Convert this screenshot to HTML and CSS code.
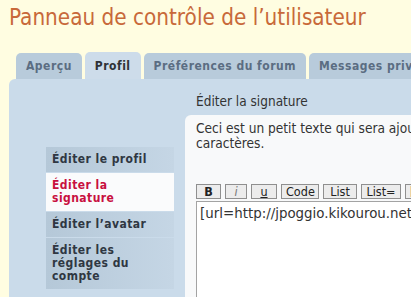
FILE: index.html
```html
<!DOCTYPE html>
<html lang="fr">
<head>
  <meta charset="UTF-8" />
  <title>Panneau de contrôle de l’utilisateur</title>
  <link rel="stylesheet" href="styles.css">
</head>
<body>
  <div class="page">
    <h1>Panneau de contrôle de l’utilisateur</h1>

    <ul class="tabs">
      <li><a href="#">Aperçu</a></li>
      <li class="active"><a href="#">Profil</a></li>
      <li><a href="#">Préférences du forum</a></li>
      <li><a href="#">Messages privés</a></li>
      <li><a href="#">Groupes d’utilisateurs</a></li>
    </ul>

    <div class="panel">
      <div class="side">
        <ul class="menu">
          <li><a href="#">Éditer le profil</a></li>
          <li class="active"><a href="#">Éditer la signature</a></li>
          <li><a href="#">Éditer l’avatar</a></li>
          <li><a href="#">Éditer les réglages du compte</a></li>
        </ul>
      </div>

      <div class="main">
        <h3>Éditer la signature</h3>
        <div class="box">
          <p>Ceci est un petit texte qui sera ajouté à la fin de chacun de vos messages. Il est limité à 255<br>caractères.</p>

          <div class="buttons">
            <button class="b">B</button>
            <button class="i">i</button>
            <button class="u">u</button>
            <button class="code">Code</button>
            <button class="list">List</button>
            <button class="list-eq">List=</button>
            <button>[*]</button>
            <button>Img</button>
            <button>URL</button>
          </div>

          <textarea rows="8">[url=http://jpoggio.kikourou.net]Mon blog[/url]</textarea>
        </div>
      </div>
    </div>
  </div>
</body>
</html>
```

FILE: styles.css
```css
html, body {
  overflow: hidden;
}
body {
  margin: 0;
  background: #fffde1;
  font-family: 'DejaVu Sans Condensed', 'DejaVu Sans', sans-serif;
  color: #333;
}
.page {
  width: 900px;
  padding-left: 9px;
}
h1 {
  margin: 0;
  padding-top: 4px;
  font-size: 22.3px;
  font-weight: normal;
  color: #c8693a;
  line-height: 26px;
}
.tabs {
  list-style: none;
  margin: 22px 0 0;
  padding-left: 7px;
  display: flex;
  align-items: flex-end;
  gap: 3px;
  white-space: nowrap;
}
.tabs li {
  background: #b8cbdb;
  border-radius: 5px 5px 0 0;
  height: 26px;
}
.tabs li.active {
  background: #cddcea;
  height: 27px;
}
.tabs a {
  display: block;
  padding: 0 10px;
  line-height: 26px;
  font-size: 12px;
  font-weight: bold;
  letter-spacing: 0.5px;
  color: #5b6d82;
  text-decoration: none;
}
.tabs li.active a {
  color: #2f3236;
  line-height: 28px;
}
.panel {
  background: #cadbea;
  border-radius: 6px 0 0 0;
  display: flex;
  min-height: 240px;
}
.side {
  width: 176px;
  padding: 68px 11px 0 37px;
  box-sizing: border-box;
}
.menu {
  list-style: none;
  margin: 0;
  padding: 0;
}
.menu li {
  margin-bottom: 1px;
  background: linear-gradient(to right, #b5c8d8, #c5d6e5);
}
.menu li.active {
  background: #fafbfc;
}
.menu a {
  display: block;
  padding: 6px 6px 6px;
  line-height: 13px;
  font-size: 12px;
  font-weight: bold;
  letter-spacing: 0.45px;
  color: #2f3742;
  text-decoration: none;
}
.menu li.active a {
  color: #c8103f;
}
.main {
  flex: 1;
}
.main h3 {
  margin: 0;
  padding: 14px 0 0 11px;
  height: 22px;
  font-size: 13.5px;
  font-weight: normal;
  color: #333;
}
.box {
  background: #f8f9fa;
  border-radius: 6px 0 0 0;
  padding: 6px 11px 0;
  min-height: 200px;
}
.box p {
  margin: 0;
  font-size: 13.6px;
  line-height: 15px;
  white-space: nowrap;
}
.buttons {
  margin-top: 33px;
  display: flex;
  gap: 4px;
}
.buttons button {
  font-family: inherit;
  font-size: 12.5px;
  height: 15px;
  padding: 0 4px;
  line-height: 13px;
  background: #ececec;
  border: 1px solid #8f8f8f;
  border-radius: 0;
  color: #222;
}
.buttons .b {
  font-weight: bold;
  width: 25px;
}
.buttons .i {
  font-style: italic;
  width: 22px;
  color: #777;
}
.buttons .u {
  text-decoration: underline;
  width: 26px;
}
.buttons .code {
  width: 38px;
}
.buttons .list {
  width: 34px;
}
.buttons .list-eq {
  width: 40px;
}
textarea {
  display: block;
  margin-top: 2px;
  width: 600px;
  border: 1px solid #a3a3a3;
  background: #fff;
  padding: 4px 3px;
  font-family: 'DejaVu Sans', sans-serif;
  font-size: 13.4px;
  color: #333;
  resize: none;
}
```
